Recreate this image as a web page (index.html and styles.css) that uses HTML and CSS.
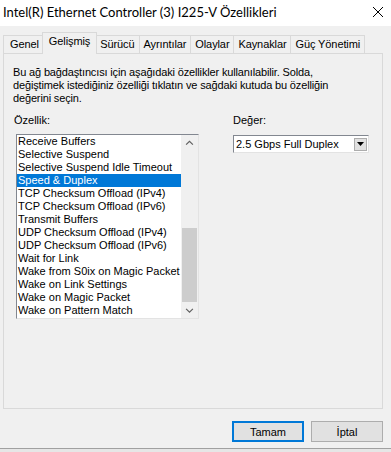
FILE: index.html
```html
<!DOCTYPE html>
<html lang="tr">
<head>
    <meta charset="UTF-8">
    <title>Intel(R) Ethernet Controller (3) I225-V Özellikleri</title>
    <link rel="stylesheet" href="styles.css">
</head>
<body>

<div class="titlebar">
    <span class="title">Intel(R) Ethernet Controller (3) I225-V Özellikleri</span>
    <svg class="close" width="12" height="12" viewBox="0 0 12 12">
        <path d="M1 1 L11 11 M11 1 L1 11" stroke="#000" stroke-width="1" fill="none"/>
    </svg>
</div>

<div class="dialog">
    <div class="tabs">
        <div class="tab">Genel</div>
        <div class="tab active">Gelişmiş</div>
        <div class="tab">Sürücü</div>
        <div class="tab">Ayrıntılar</div>
        <div class="tab">Olaylar</div>
        <div class="tab">Kaynaklar</div>
        <div class="tab">Güç Yönetimi</div>
    </div>

    <div class="panel">
        <p class="desc">Bu ağ bağdaştıncısı için aşağıdaki özellikler kullanılabilir. Solda,<br>değiştimek istediğiniz özelliği tıklatın ve sağdaki kutuda bu özelliğin<br>değerini seçin.</p>

        <div class="fields">
            <div class="field prop">
                <label>Özellik:</label>
                <div class="listbox">
                    <ul class="items">
                        <li>Receive Buffers</li>
                        <li>Selective Suspend</li>
                        <li>Selective Suspend Idle Timeout</li>
                        <li class="selected">Speed &amp; Duplex</li>
                        <li>TCP Checksum Offload (IPv4)</li>
                        <li>TCP Checksum Offload (IPv6)</li>
                        <li>Transmit Buffers</li>
                        <li>UDP Checksum Offload (IPv4)</li>
                        <li>UDP Checksum Offload (IPv6)</li>
                        <li>Wait for Link</li>
                        <li>Wake from S0ix on Magic Packet</li>
                        <li>Wake on Link Settings</li>
                        <li>Wake on Magic Packet</li>
                        <li>Wake on Pattern Match</li>
                    </ul>
                    <div class="scrollbar">
                        <svg class="arrow" width="17" height="17" viewBox="0 0 17 17">
                            <path d="M5 10 L8.5 6.5 L12 10" stroke="#606060" stroke-width="1.2" fill="none"/>
                        </svg>
                        <div class="track"><div class="thumb"></div></div>
                        <svg class="arrow" width="17" height="17" viewBox="0 0 17 17">
                            <path d="M5 7 L8.5 10.5 L12 7" stroke="#606060" stroke-width="1.2" fill="none"/>
                        </svg>
                    </div>
                </div>
            </div>

            <div class="field value">
                <label>Değer:</label>
                <div class="combo">
                    <span class="combo-text">2.5 Gbps Full Duplex</span>
                    <span class="combo-btn">
                        <svg width="7" height="4" viewBox="0 0 7 4"><path d="M0 0 H7 L3.5 4 Z" fill="#000"/></svg>
                    </span>
                </div>
            </div>
        </div>
    </div>

    <div class="buttons">
        <button class="btn default">Tamam</button>
        <button class="btn">İptal</button>
    </div>
</div>

<div class="bottom-edge"></div>

</body>
</html>
```

FILE: styles.css
```css
body {
    margin: 0;
    background-color: #f0f0f0;
    font-family: "Liberation Sans", Arial, sans-serif;
    font-size: 11px;
    color: #000;
    width: 391px;
    height: 452px;
    overflow: hidden;
}

.titlebar {
    height: 26px;
    background-color: #fff;
    display: flex;
    align-items: center;
    justify-content: space-between;
    padding: 0 7px 0 3px;
}

.title {
    font-family: Lato, "Noto Sans", sans-serif;
    font-size: 13px;
    margin-top: -2px;
}

.close {
    margin-top: -2px;
}

.dialog {
    padding: 0 8px 0 3px;
}

.tabs {
    display: flex;
    align-items: flex-end;
    height: 27px;
    position: relative;
    z-index: 1;
}

.tab {
    height: 17px;
    line-height: 17px;
    padding: 0 4px;
    border: 1px solid #d9d9d9;
    border-bottom: none;
    margin-right: -1px;
    background-color: #f0f0f0;
    letter-spacing: -0.1px;
}

.tab:first-child {
    padding: 0 5px 0 6px;
}

.tab.active {
    height: 21px;
    line-height: 17px;
    background-color: #f0f0f0;
    margin: 0 -2px -1px -2px;
    padding: 0 6px;
    position: relative;
    z-index: 2;
}

.panel {
    height: 354px;
    border: 1px solid #d9d9d9;
    background-color: #f0f0f0;
    padding: 0 10px 0 9px;
}

.desc {
    margin: 12px 0 0 0;
    line-height: 13px;
    white-space: nowrap;
    letter-spacing: -0.15px;
}

.fields {
    display: flex;
    margin-top: 9px;
}

.field label {
    display: block;
    height: 20px;
    line-height: 13px;
}

.prop {
    width: 187px;
    padding-left: 3px;
}

.prop label {
    margin-left: -2px;
}

.value {
    margin-left: 30px;
}

.listbox {
    width: 181px;
    height: 183px;
    border: 1px solid;
    border-color: #828790 #e3e3e3 #e3e3e3 #828790;
    background-color: #fff;
    display: flex;
}

.items {
    list-style: none;
    margin: 0;
    padding: 0;
    flex: 1;
    overflow: hidden;
}

.items li {
    height: 13px;
    line-height: 13px;
    padding-left: 1px;
    white-space: nowrap;
}

.items li.selected {
    background-color: #0078d7;
    color: #fff;
}

.scrollbar {
    width: 17px;
    background-color: #f0f0f0;
    display: flex;
    flex-direction: column;
}

.track {
    flex: 1;
    padding-top: 76px;
}

.thumb {
    margin: 0 1px;
    height: 74px;
    background-color: #cdcdcd;
}

.combo {
    width: 132px;
    height: 14px;
    margin-top: 1px;
    border: 1px solid;
    border-color: #828790 #e3e3e3 #e3e3e3 #828790;
    background-color: #fff;
    display: flex;
    align-items: center;
    padding: 1px;
}

.combo-text {
    flex: 1;
    padding-left: 1px;
}

.combo-btn {
    width: 13px;
    height: 13px;
    border: 1px solid #adadad;
    background-color: #e1e1e1;
    display: flex;
    align-items: center;
    justify-content: center;
    box-sizing: border-box;
}

.buttons {
    display: flex;
    justify-content: flex-end;
    gap: 7px;
    margin-top: 12px;
    padding-right: 0;
}

.btn {
    width: 72px;
    height: 21px;
    font-family: "Liberation Sans", Arial, sans-serif;
    font-size: 11px;
    background-color: #e1e1e1;
    border: 1px solid #adadad;
    padding: 0;
}

.btn.default {
    border: 2px solid #0078d7;
}

.bottom-edge {
    margin-top: 6px;
    height: 4px;
    border-top: 1px solid #a0a0a0;
    background-color: #e6e6e6;
}
```
